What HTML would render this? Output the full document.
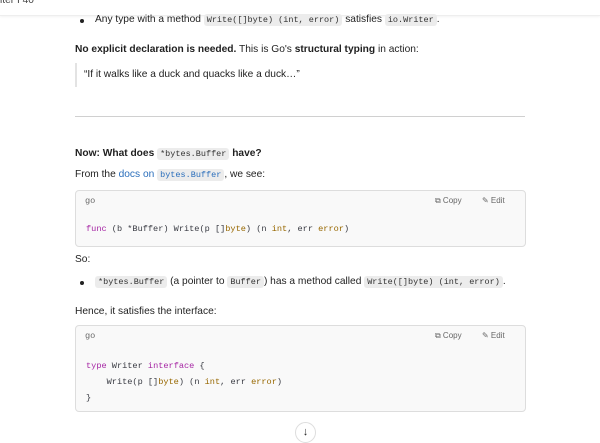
<!DOCTYPE html>
<html><head><style>
body{margin:0;width:600px;height:440px;overflow:hidden;background:#fff;font-family:"Liberation Sans",sans-serif;font-size:10.2px;color:#1f1f1f;position:relative}
.a{position:absolute;white-space:nowrap;line-height:14px}
code,.m{font-family:"Liberation Mono",monospace;font-size:8.5px}
.cb .m{font-size:8.6px}
code{background:#ececec;border-radius:3px;padding:1px 3px;color:#333}
.cb{position:absolute;left:75px;width:449px;background:#f9f9f9;border:1px solid #ddd;border-radius:4px}
.k{color:#a626a4}.t{color:#986801}
.hd{font-size:8px;color:#666;position:absolute}
.bul{position:absolute;width:4px;height:4px;border-radius:50%;background:#222}
</style></head><body>
<div style="position:absolute;left:0;top:0;width:600px;height:15px;border-bottom:1px solid #eee;box-shadow:0 1px 2px rgba(0,0,0,.05)"></div>
<div class="a" style="left:0;top:-6px;color:#444">iter I 40</div>
<div class="bul" style="left:80px;top:19px"></div>
<div class="a" style="left:95px;top:13px">Any type with a method <code>Write([]byte) (int, error)</code> satisfies <code>io.Writer</code>.</div>
<div class="a" style="left:75px;top:43px"><b>No explicit declaration is needed.</b> This is Go's <b>structural typing</b> in action:</div>
<div style="position:absolute;left:75px;top:63px;width:2px;height:24px;background:#e3e3e3"></div>
<div class="a" style="left:84px;top:68px">“If it walks like a duck and quacks like a duck…”</div>
<div style="position:absolute;left:75px;top:116px;width:450px;height:1px;background:#d0d0d0"></div>
<div class="a" style="left:75px;top:147px"><b>Now: What does <code style="font-weight:normal">*bytes.Buffer</code> have?</b></div>
<div class="a" style="left:75px;top:168px">From the <span style="color:#2a6ebb">docs on <code style="color:#2a6ebb">bytes.Buffer</code></span>, we see:</div>
<div class="cb" style="top:190px;height:55px">
<div class="hd m" style="left:9px;top:5px">go</div>
<div class="hd" style="left:359px;top:5px">⧉ Copy</div>
<div class="hd" style="left:406px;top:5px">✎ Edit</div>
<div class="a m" style="left:10px;top:31px;color:#383a42"><span class="k">func</span> (b *Buffer) Write(p []<span class="t">byte</span>) (n <span class="t">int</span>, err <span class="t">error</span>)</div>
</div>
<div class="a" style="left:75px;top:253px">So:</div>
<div class="bul" style="left:80px;top:281px"></div>
<div class="a" style="left:95px;top:275px"><code>*bytes.Buffer</code> (a pointer to <code>Buffer</code>) has a method called <code>Write([]byte) (int, error)</code>.</div>
<div class="a" style="left:75px;top:305px">Hence, it satisfies the interface:</div>
<div class="cb" style="top:325px;height:85px">
<div class="hd m" style="left:9px;top:5px">go</div>
<div class="hd" style="left:359px;top:5px">⧉ Copy</div>
<div class="hd" style="left:406px;top:5px">✎ Edit</div>
<div class="a m" style="left:10px;top:32px;color:#383a42;line-height:16px;white-space:pre"><span class="k">type</span> Writer <span class="k">interface</span> {
    Write(p []<span class="t">byte</span>) (n <span class="t">int</span>, err <span class="t">error</span>)
}</div>
</div>
<div style="position:absolute;left:295px;top:422px;width:19px;height:19px;border:1px solid #ddd;border-radius:50%;background:#fff;text-align:center;line-height:19px;font-size:11px">↓</div>
</body></html>
